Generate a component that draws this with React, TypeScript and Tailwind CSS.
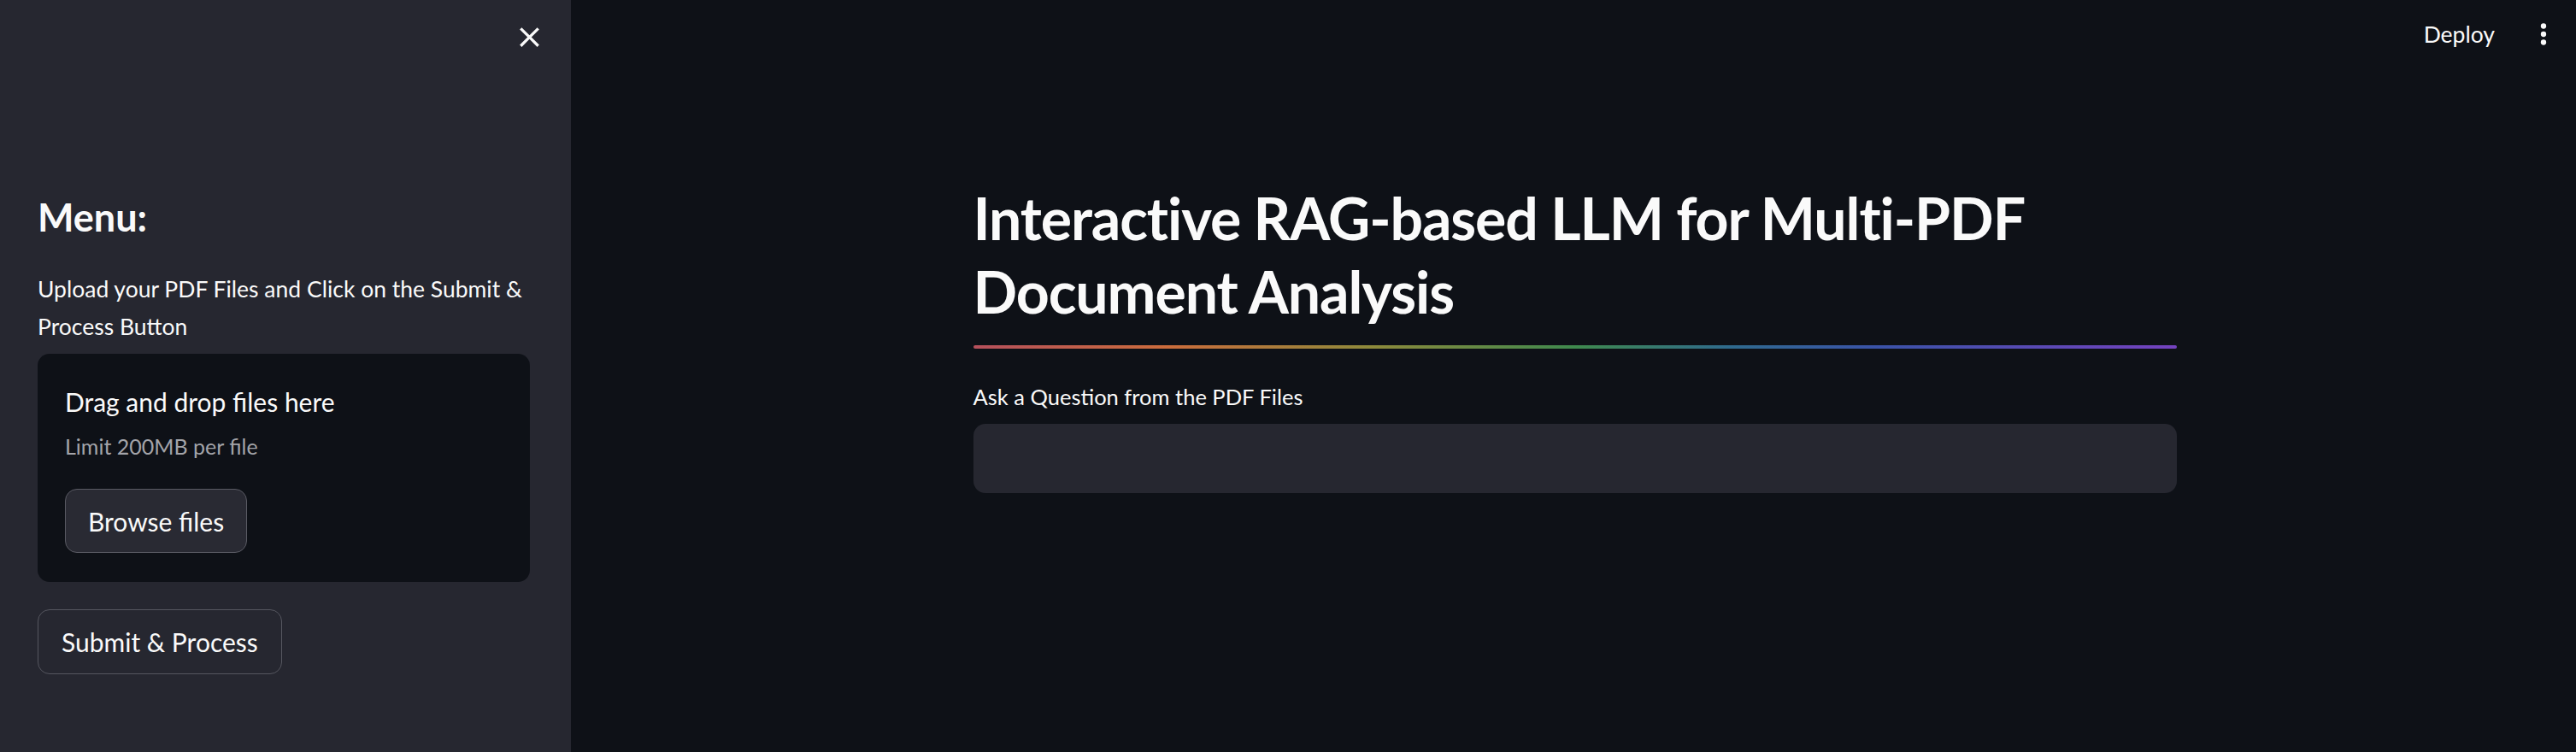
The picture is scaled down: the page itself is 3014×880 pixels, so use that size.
import React from "react";

const font = { fontFamily: 'Lato, "Noto Sans", sans-serif' };

function CloseIcon() {
  return (
    <svg width="39" height="39" viewBox="0 0 24 24" fill="#fafafa">
      <path d="M19 6.41L17.59 5 12 10.59 6.41 5 5 6.41 10.59 12 5 17.59 6.41 19 12 13.41 17.59 19 19 17.59 13.41 12z" />
    </svg>
  );
}

function MoreIcon() {
  return (
    <svg width="38" height="38" viewBox="0 0 24 24" fill="#fafafa">
      <circle cx="12" cy="6" r="2" />
      <circle cx="12" cy="12" r="2" />
      <circle cx="12" cy="18" r="2" />
    </svg>
  );
}

export default function App() {
  return (
    <div className="flex h-[880px] w-full overflow-hidden bg-[#0e1117] text-[#fafafa]" style={font}>
      {/* Sidebar */}
      <aside className="flex h-full w-[668px] shrink-0 flex-col bg-[#262730] pl-[44px] pr-[48px]">
        <div className="mr-[-19px] flex h-[86px] items-center justify-end">
          <button className="flex h-[39px] w-[39px] items-center justify-center">
            <CloseIcon />
          </button>
        </div>
        <h2 className="mt-[140px] text-[45px] font-bold leading-[56px]">Menu:</h2>
        <p className="mt-[34px] text-[26.5px] leading-[44px]">
          Upload your PDF Files and Click on the Submit &amp; Process Button
        </p>
        <div className="mt-[10px] flex h-[267px] flex-col rounded-[14px] bg-[#0e1117] px-[32px] pt-[36px]">
          <div className="text-[30px] leading-[40px]">Drag and drop files here</div>
          <div className="mt-[15px] text-[25px] leading-[34px] text-[#a3a4a9]">Limit 200MB per file</div>
          <div className="mt-[33px]">
            <button className="h-[75px] rounded-[14px] border border-[#595a63] bg-[#292a33] px-[26px] text-[30px] leading-[36px] text-[#fafafa]">
              Browse files
            </button>
          </div>
        </div>
        <div className="mt-[32px]">
          <button className="h-[76px] rounded-[14px] border border-[#55565f] bg-[#262730] px-[27px] text-[30px] leading-[36px] text-[#fafafa]">
            Submit &amp; Process
          </button>
        </div>
      </aside>

      {/* Main */}
      <main className="flex h-full flex-1 flex-col pl-[3px]">
        <header className="flex h-[79px] items-center justify-end pr-[19px]">
          <span className="text-[26.5px] leading-[36px]">Deploy</span>
          <span className="ml-[38px] flex">
            <MoreIcon />
          </span>
        </header>
        <div className="mx-auto mt-[133px] flex w-[1408px] flex-col">
          <h1 className="text-[68px] font-bold leading-[86px] tracking-[-1.1px]">
            Interactive RAG-based LLM for Multi-PDF Document Analysis
          </h1>
          <div className="mt-[20px] h-[4px] w-full rounded-full bg-[linear-gradient(to_right,#b5505c_0%,#cb6c3c_16%,#8e8a3b_33%,#3f8a4e_50%,#2f6a8e_63%,#3a53a8_75%,#7442bf_100%)]" />
          <label className="mt-[40px] text-[25.5px] leading-[32px]">Ask a Question from the PDF Files</label>
          <div className="mt-[16px] h-[81px] w-full rounded-[14px] bg-[#262730]" />
        </div>
      </main>
    </div>
  );
}
